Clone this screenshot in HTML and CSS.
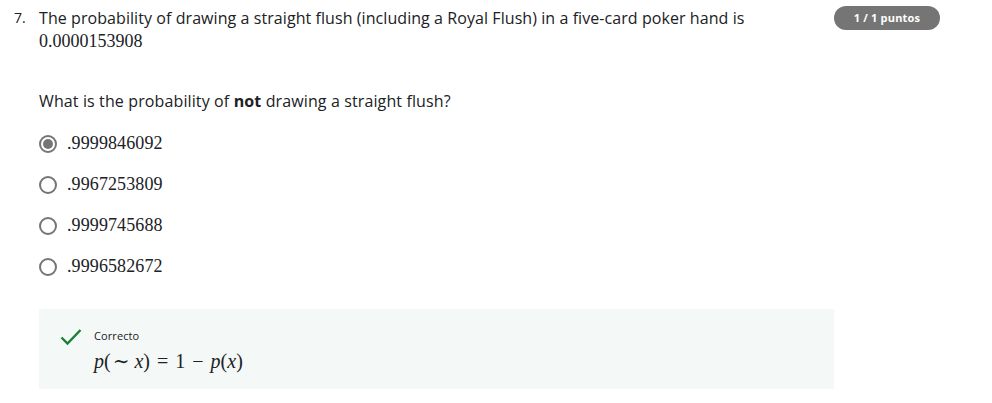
FILE: index.html
```html
<!DOCTYPE html>
<html>
<head>
<meta charset="utf-8">
<link rel="stylesheet" href="styles.css">
</head>
<body>
<div class="item">
  <div class="head">
    <div class="num">7.</div>
    <div class="title">
      <div class="line">The probability of drawing a straight flush (including a Royal Flush) in a five-card poker hand is</div>
      <div class="math-line">0.0000153908</div>
    </div>
    <div class="badge">1 / 1 puntos</div>
  </div>
  <div class="body">
    <p class="prompt">What is the probability of <b>not</b> drawing a straight flush?</p>
    <div class="options">
      <div class="opt"><span class="radio checked"></span><span class="val">.9999846092</span></div>
      <div class="opt"><span class="radio"></span><span class="val">.9967253809</span></div>
      <div class="opt"><span class="radio"></span><span class="val">.9999745688</span></div>
      <div class="opt"><span class="radio"></span><span class="val">.9996582672</span></div>
    </div>
    <div class="feedback">
      <svg class="check" width="22" height="18" viewBox="0 0 22 18"><path d="M1.5 9.5 L7.5 15.5 L20.5 2" fill="none" stroke="#188038" stroke-width="2.4"/></svg>
      <div class="fb-text">
        <div class="fb-label">Correcto</div>
        <div class="formula"><i>p</i>(<span class="tilde">∼</span><i>x</i>)<span class="op">=</span>1<span class="op">−</span><i>p</i>(<i>x</i>)</div>
      </div>
    </div>
  </div>
</div>
</body>
</html>
```

FILE: styles.css
```css
html, body { margin: 0; padding: 0; background: #fff; }
body { font-family: "Open Sans", "Liberation Sans", sans-serif; color: #202124; }
.item { padding: 6px 52px 0 14px; }
.head { display: flex; align-items: flex-start; }
.num { width: 25px; font-size: 14px; line-height: 22px; padding-top: 1px; color: #202124; }
.title { flex: 1; font-size: 16px; line-height: 23px; letter-spacing: 0.07px; }
.line { padding-top: 1px; }
.math-line { font-family: "Liberation Serif", "DejaVu Serif", serif; font-size: 18px; line-height: 23px; letter-spacing: 0; }
.badge { background: #757575; color: #fff; font-weight: 700; font-size: 11px; height: 24px; line-height: 24px; border-radius: 12px; width: 106px; text-align: center; letter-spacing: 0.2px; }
.body { padding-left: 25px; }
.prompt { margin: 36px 0 0 0; font-size: 16px; line-height: 24px; letter-spacing: 0.12px; }
.options { margin-top: 10px; }
.opt { display: flex; align-items: center; height: 41px; }
.radio { width: 14px; height: 14px; border: 2px solid #757575; border-radius: 50%; box-sizing: content-box; position: relative; }
.radio.checked::after { content: ""; position: absolute; left: 2px; top: 2px; width: 10px; height: 10px; border-radius: 50%; background: #757575; }
.val { margin-left: 10px; font-family: "Liberation Serif", serif; font-size: 18px; letter-spacing: 0.1px; }
.feedback { margin-top: 22px; width: 795px; height: 80px; background: #f4f8f7; display: flex; align-items: flex-start; box-sizing: border-box; padding: 19px 0 0 21px; }
.check { margin-top: 0; }
.fb-text { margin-left: 12px; }
.fb-label { font-size: 11px; line-height: 16px; color: #202124; letter-spacing: 0.1px; }
.formula { font-family: "Liberation Serif", "DejaVu Serif", serif; font-size: 20px; line-height: 24px; margin-top: 5px; }
.formula i { font-style: italic; }
.tilde { margin: 0 5px 0 2px; }
.op { margin: 0 7px; }
```
